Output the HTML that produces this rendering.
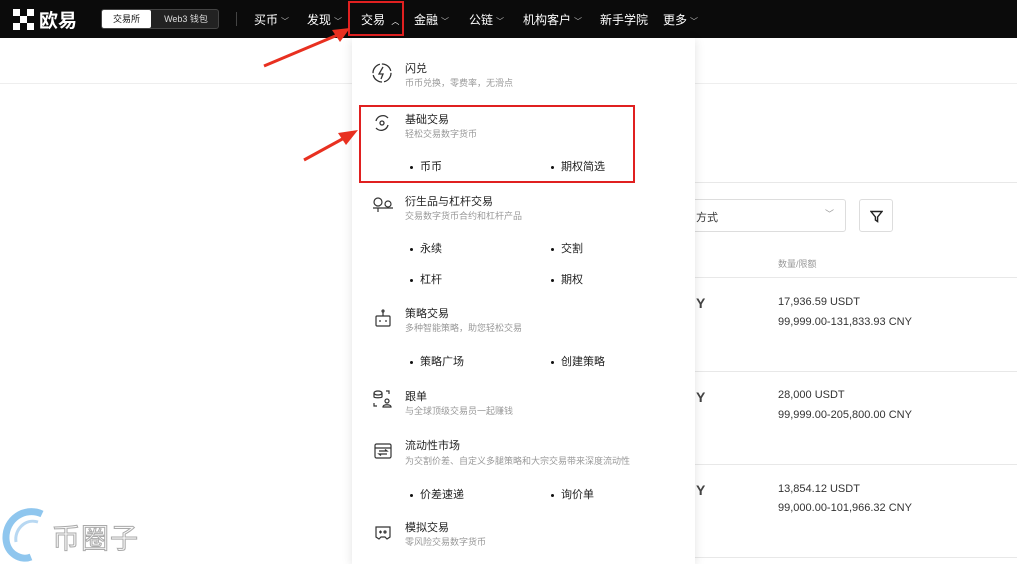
<!DOCTYPE html>
<html><head><meta charset="utf-8"><style>
*{margin:0;padding:0;box-sizing:border-box}
body{width:1017px;height:564px;overflow:hidden;background:#fff;font-family:"Liberation Sans","Noto Sans CJK SC",sans-serif;position:relative;color:#111}
.a{position:absolute}
.top{left:0;top:0;width:1017px;height:38px;background:#0b0b0b}
.nav{color:#fff;font-size:12px;top:11px}
.nav small{font-size:8px;color:#bbb;margin-left:3px}
.line{height:1px;background:#e8e8e8}
.dd{left:352px;top:38px;width:343px;height:526px;background:#fff;box-shadow:0 2px 10px rgba(0,0,0,.12)}
.t{font-size:11px;color:#222}
.s{font-size:9px;color:#999}
.b{font-size:11px;color:#222}
.b:before{content:"";display:inline-block;width:3px;height:3px;background:#111;border-radius:50%;margin-right:7px;vertical-align:middle}
.num{font-size:11px;color:#333}
.red{border:2px solid #e02020}
</style></head><body>
<div class="a top"></div>
<div class="a" style="left:13px;top:9px;width:21px;height:21px">
<svg width="21" height="21" viewBox="0 0 21 21" fill="#fff"><rect x="0" y="0" width="7" height="7"/><rect x="14" y="0" width="7" height="7"/><rect x="7" y="7" width="7" height="7"/><rect x="0" y="14" width="7" height="7"/><rect x="14" y="14" width="7" height="7"/></svg></div>
<div class="a" style="left:39px;top:6px;color:#fff;font-size:19px;font-weight:bold">欧易</div>
<div class="a" style="left:101px;top:9px;width:118px;height:20px;border:1px solid #444;border-radius:3px;background:#222"></div>
<div class="a" style="left:102px;top:10px;width:49px;height:18px;background:#fff;border-radius:2px;font-size:9px;text-align:center;line-height:18px;color:#111">交易所</div>
<div class="a" style="left:156px;top:10px;width:60px;height:18px;font-size:9px;text-align:center;line-height:18px;color:#ddd">Web3 钱包</div>
<div class="a" style="left:236px;top:12px;width:1px;height:14px;background:#444"></div>
<div class="a nav" style="left:254px">买币<small>﹀</small></div>
<div class="a nav" style="left:307px">发现<small>﹀</small></div>
<div class="a nav" style="left:361px">交易 <small style="color:#fff">︿</small></div>
<div class="a red" style="left:348px;top:1px;width:56px;height:35px"></div>
<div class="a nav" style="left:414px">金融<small>﹀</small></div>
<div class="a nav" style="left:469px">公链<small>﹀</small></div>
<div class="a nav" style="left:523px">机构客户<small>﹀</small></div>
<div class="a nav" style="left:600px">新手学院</div>
<div class="a nav" style="left:663px">更多<small>﹀</small></div>

<div class="a line" style="left:0;top:83px;width:1017px;background:#eee"></div>
<div class="a line" style="left:695px;top:182px;width:322px"></div>
<div class="a" style="left:690px;top:199px;width:156px;height:33px;border:1px solid #ddd;border-radius:3px;font-size:11px;padding:9px 0 0 5px;color:#333">方式<span style="position:absolute;left:134px;top:7px;font-size:9px;color:#999">﹀</span></div>
<div class="a" style="left:859px;top:199px;width:34px;height:33px;border:1px solid #ddd;border-radius:3px">
<svg class="a" style="left:10px;top:10px" width="13" height="13" viewBox="0 0 13 13" fill="none" stroke="#222" stroke-width="1.4"><path d="M1 1.5h11L7.6 7v4.5L5.4 10V7z"/></svg></div>
<div class="a s" style="left:778px;top:257px">数量/限额</div>
<div class="a line" style="left:695px;top:277px;width:322px"></div>
<div class="a line" style="left:695px;top:371px;width:322px"></div>
<div class="a line" style="left:695px;top:464px;width:322px"></div>
<div class="a line" style="left:695px;top:557px;width:322px"></div>
<div class="a" style="left:696px;top:295px;font-size:14px;font-weight:bold;color:#444">Y</div>
<div class="a" style="left:696px;top:389px;font-size:14px;font-weight:bold;color:#444">Y</div>
<div class="a" style="left:696px;top:482px;font-size:14px;font-weight:bold;color:#444">Y</div>
<div class="a num" style="left:778px;top:296px">17,936.59 USDT</div>
<div class="a num" style="left:778px;top:316px">99,999.00-131,833.93 CNY</div>
<div class="a num" style="left:778px;top:389px">28,000 USDT</div>
<div class="a num" style="left:778px;top:409px">99,999.00-205,800.00 CNY</div>
<div class="a num" style="left:778px;top:483px">13,854.12 USDT</div>
<div class="a num" style="left:778px;top:502px">99,000.00-101,966.32 CNY</div>

<div class="a dd"></div>
<svg class="a" style="left:371px;top:62px" width="22" height="22" viewBox="0 0 22 22" fill="none" stroke="#333" stroke-width="1.3"><circle cx="11" cy="11" r="9" stroke-dasharray="12 2"/><path d="M12 5l-4 7h4l-2 5"/></svg>
<div class="a t" style="left:405px;top:60px">闪兑</div>
<div class="a s" style="left:405px;top:76px">币币兑换，零费率，无滑点</div>
<svg class="a" style="left:372px;top:113px" width="20" height="20" viewBox="0 0 20 20" fill="none" stroke="#333" stroke-width="1.3"><path d="M4 8a7 7 0 0 1 12-3M16 12a7 7 0 0 1-12 3"/><circle cx="10" cy="10" r="2"/></svg>
<div class="a t" style="left:405px;top:111px">基础交易</div>
<div class="a s" style="left:405px;top:127px">轻松交易数字货币</div>
<div class="a b" style="left:410px;top:158px">币币</div>
<div class="a b" style="left:551px;top:158px">期权简选</div>
<div class="a red" style="left:359px;top:105px;width:276px;height:78px"></div>
<svg class="a" style="left:372px;top:196px" width="22" height="20" viewBox="0 0 22 20" fill="none" stroke="#333" stroke-width="1.2"><circle cx="6" cy="6" r="4"/><circle cx="16" cy="8" r="3"/><path d="M1 12h20M6 12v4"/></svg>
<div class="a t" style="left:405px;top:193px">衍生品与杠杆交易</div>
<div class="a s" style="left:405px;top:209px">交易数字货币合约和杠杆产品</div>
<div class="a b" style="left:410px;top:240px">永续</div>
<div class="a b" style="left:551px;top:240px">交割</div>
<div class="a b" style="left:410px;top:271px">杠杆</div>
<div class="a b" style="left:551px;top:271px">期权</div>
<svg class="a" style="left:374px;top:308px" width="18" height="20" viewBox="0 0 18 20" fill="none" stroke="#333" stroke-width="1.2"><rect x="2" y="8" width="14" height="10" rx="1"/><path d="M9 8V4"/><circle cx="9" cy="3" r="1"/><path d="M6 12v2M12 12v2"/></svg>
<div class="a t" style="left:405px;top:305px">策略交易</div>
<div class="a s" style="left:405px;top:321px">多种智能策略，助您轻松交易</div>
<div class="a b" style="left:410px;top:353px">策略广场</div>
<div class="a b" style="left:551px;top:353px">创建策略</div>
<svg class="a" style="left:373px;top:389px" width="20" height="20" viewBox="0 0 20 20" fill="none" stroke="#333" stroke-width="1.2"><ellipse cx="5" cy="4" rx="4" ry="2"/><path d="M1 4v4c0 1 8 1 8 0V4M1 14v3h3M13 2h3v3"/><circle cx="14" cy="12" r="2"/><path d="M10 18c0-3 8-3 8 0z"/></svg>
<div class="a t" style="left:405px;top:388px">跟单</div>
<div class="a s" style="left:405px;top:404px">与全球顶级交易员一起赚钱</div>
<svg class="a" style="left:374px;top:442px" width="18" height="18" viewBox="0 0 18 18" fill="none" stroke="#333" stroke-width="1.2"><rect x="1" y="2" width="16" height="14" rx="1.5"/><path d="M1 6h16M5 9h8l-2-1.5M13 12H5l2 1.5"/></svg>
<div class="a t" style="left:405px;top:437px">流动性市场</div>
<div class="a s" style="left:405px;top:454px">为交割价差、自定义多腿策略和大宗交易带来深度流动性</div>
<div class="a b" style="left:410px;top:486px">价差速递</div>
<div class="a b" style="left:551px;top:486px">询价单</div>
<svg class="a" style="left:374px;top:525px" width="18" height="16" viewBox="0 0 18 16" fill="none" stroke="#333" stroke-width="1.2"><path d="M2 2h14v10l-3 2-2-2H7l-2 2-3-2z"/><circle cx="11" cy="7" r="1"/><path d="M5 7h3M6.5 5.5v3"/></svg>
<div class="a t" style="left:405px;top:519px">模拟交易</div>
<div class="a s" style="left:405px;top:535px">零风险交易数字货币</div>

<svg class="a" style="left:262px;top:20px" width="100" height="50" viewBox="0 0 100 50"><path d="M2 46L78 14" stroke="#e83020" stroke-width="3"/><path d="M88 8L70 10l8 12z" fill="#e83020"/></svg>
<svg class="a" style="left:302px;top:125px" width="60" height="40" viewBox="0 0 60 40"><path d="M2 35L44 12" stroke="#e83020" stroke-width="3"/><path d="M56 5L36 8l8 12z" fill="#e83020"/></svg>

<svg class="a" style="left:0;top:504px" width="50" height="60" viewBox="0 0 50 60" fill="none"><path d="M42 10C25 2 5 15 6 35c1 15 15 22 25 18" stroke="#8fc6ee" stroke-width="7"/><path d="M38 18C25 14 14 26 16 38" stroke="#b8d8f2" stroke-width="3"/></svg>
<div class="a" style="left:52px;top:517px;font-size:28px;color:#fafafa;-webkit-text-stroke:1px #aaa;letter-spacing:1px">币圈子</div>
</body></html>
